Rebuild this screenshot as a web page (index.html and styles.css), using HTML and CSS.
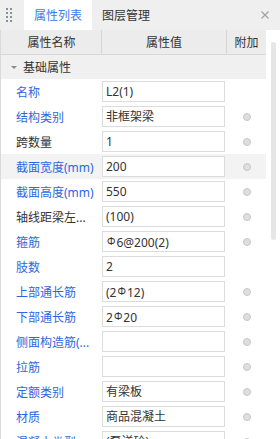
FILE: index.html
```
<!DOCTYPE html>
<html lang="zh-CN">
<head>
<meta charset="UTF-8">
<title>属性列表</title>
<link rel="stylesheet" href="styles.css">
</head>
<body>
  <div class="panel">
    <div class="tab-bar">
      <div class="grip">
        <span></span><span></span><span></span><span></span>
        <span></span><span></span><span></span><span></span>
      </div>
      <div class="tab active">属性列表</div>
      <div class="tab">图层管理</div>
      <div class="tab-close">
        <svg viewBox="0 0 8 8" width="8" height="8"><path d="M0.5 0.5L7.5 7.5M7.5 0.5L0.5 7.5" stroke="#a0a0a0" stroke-width="1.1" fill="none"/></svg>
      </div>
    </div>
    <div class="panel-body">
      <div class="grid">
        <div class="grid-head">
          <div class="col-name">属性名称</div>
          <div class="col-value">属性值</div>
          <div class="col-extra">附加</div>
        </div>
        <div class="group-row"><span class="caret"></span>基础属性</div>

        <div class="row">
          <div class="name blue">名称</div>
          <div class="value"><div class="box">L2(1)</div></div>
          <div class="extra"></div>
        </div>
        <div class="row">
          <div class="name blue">结构类别</div>
          <div class="value"><div class="box">非框架梁</div></div>
          <div class="extra"><span class="dot"></span></div>
        </div>
        <div class="row">
          <div class="name">跨数量</div>
          <div class="value"><div class="box">1</div></div>
          <div class="extra"><span class="dot"></span></div>
        </div>
        <div class="row hover">
          <div class="name blue">截面宽度(mm)</div>
          <div class="value"><div class="box">200</div></div>
          <div class="extra"><span class="dot"></span></div>
        </div>
        <div class="row">
          <div class="name blue">截面高度(mm)</div>
          <div class="value"><div class="box">550</div></div>
          <div class="extra"><span class="dot"></span></div>
        </div>
        <div class="row">
          <div class="name">轴线距梁左...</div>
          <div class="value"><div class="box">(100)</div></div>
          <div class="extra"><span class="dot"></span></div>
        </div>
        <div class="row">
          <div class="name blue">箍筋</div>
          <div class="value"><div class="box"><span class="rebar">Φ</span>6@200(2)</div></div>
          <div class="extra"><span class="dot"></span></div>
        </div>
        <div class="row">
          <div class="name blue">肢数</div>
          <div class="value"><div class="box">2</div></div>
          <div class="extra"></div>
        </div>
        <div class="row">
          <div class="name blue">上部通长筋</div>
          <div class="value"><div class="box">(2<span class="rebar">Φ</span>12)</div></div>
          <div class="extra"><span class="dot"></span></div>
        </div>
        <div class="row">
          <div class="name blue">下部通长筋</div>
          <div class="value"><div class="box">2<span class="rebar">Φ</span>20</div></div>
          <div class="extra"><span class="dot"></span></div>
        </div>
        <div class="row">
          <div class="name blue">侧面构造筋(...</div>
          <div class="value"><div class="box"></div></div>
          <div class="extra"><span class="dot"></span></div>
        </div>
        <div class="row">
          <div class="name blue">拉筋</div>
          <div class="value"><div class="box"></div></div>
          <div class="extra"><span class="dot"></span></div>
        </div>
        <div class="row">
          <div class="name blue">定额类别</div>
          <div class="value"><div class="box">有梁板</div></div>
          <div class="extra"><span class="dot"></span></div>
        </div>
        <div class="row">
          <div class="name blue">材质</div>
          <div class="value"><div class="box">商品混凝土</div></div>
          <div class="extra"><span class="dot"></span></div>
        </div>
        <div class="row">
          <div class="name blue">混凝土类型</div>
          <div class="value"><div class="box">(泵送砼)</div></div>
          <div class="extra"><span class="dot"></span></div>
        </div>
      </div>
      <div class="scroll-track"><div class="scroll-thumb"></div></div>
    </div>
  </div>
</body>
</html>
```
FILE: styles.css
```
html, body {
  margin: 0;
  padding: 0;
  background: #fff;
  font-family: "Noto Sans", "Noto Sans CJK SC", sans-serif;
  font-size: 12px;
  color: #333;
}
.panel {
  width: 280px;
  height: 439px;
  overflow: hidden;
  display: flex;
  flex-direction: column;
}
/* tabs */
.tab-bar {
  height: 30px;
  flex: none;
  background: #efefef;
  display: flex;
  align-items: stretch;
}
.grip {
  width: 24px;
  display: grid;
  grid-template-columns: 2px 2px;
  grid-auto-rows: 2px;
  column-gap: 2px;
  row-gap: 2px;
  align-content: center;
  padding-left: 6px;
  box-sizing: border-box;
}
.grip span {
  background: #8a8f99;
}
.tab {
  padding: 0 10px;
  display: flex;
  align-items: center;
  color: #333;
}
.tab.active {
  background: #fff;
  color: #3a7af0;
}
.tab-close {
  margin-left: auto;
  width: 30px;
  display: flex;
  align-items: center;
  justify-content: center;
  padding-left: 2px;
}
/* body */
.panel-body {
  flex: 1;
  display: flex;
  min-height: 0;
}
.grid {
  width: 266px;
  flex: none;
  border-left: 1px solid #dadada;
  box-sizing: border-box;
}
.grid-head {
  display: flex;
  height: 24px;
  background: #ececec;
  border-bottom: 1px solid #d8d8d8;
}
.grid-head > div {
  display: flex;
  align-items: center;
  justify-content: center;
}
.col-name {
  width: 101px;
  border-right: 1px solid #d6d6d6;
  box-sizing: border-box;
  padding-left: 1px;
}
.col-value {
  width: 125px;
  border-right: 1px solid #d6d6d6;
  box-sizing: border-box;
}
.col-extra {
  width: 39px;
}
.group-row {
  height: 24px;
  background: #f0f0f0;
  display: flex;
  align-items: center;
  padding-left: 10px;
}
.caret {
  width: 0;
  height: 0;
  border-left: 3px solid transparent;
  border-right: 3px solid transparent;
  border-top: 3px solid #8a8a8a;
  margin-right: 6px;
}
.row {
  display: flex;
  height: 25px;
  align-items: center;
}
.row.hover {
  background: #f3f3f3;
}
.name {
  width: 101px;
  flex: none;
  padding-left: 15px;
  box-sizing: border-box;
  white-space: nowrap;
  overflow: hidden;
}
.name.blue {
  color: #2f66e0;
}
.value {
  width: 125px;
  flex: none;
  padding-right: 2px;
  box-sizing: border-box;
}
.box {
  height: 21px;
  border: 1px solid #dcdcdc;
  background: #fff;
  box-sizing: border-box;
  padding-left: 3px;
  line-height: 19px;
  white-space: nowrap;
  overflow: hidden;
}
.rebar {
  font-size: 10px;
  vertical-align: 2px;
  margin: 0 1px;
}
.extra {
  width: 39px;
  flex: none;
  display: flex;
  justify-content: center;
}
.dot {
  width: 8px;
  height: 8px;
  border-radius: 50%;
  background: #dedede;
  border: 1px solid #c8c8c8;
  box-sizing: border-box;
}
/* scrollbar */
.scroll-track {
  flex: 1;
  padding: 12px 0 0 5px;
}
.scroll-thumb {
  width: 5px;
  height: 198px;
  border-radius: 3px;
  background: #e6e6e6;
}
```
